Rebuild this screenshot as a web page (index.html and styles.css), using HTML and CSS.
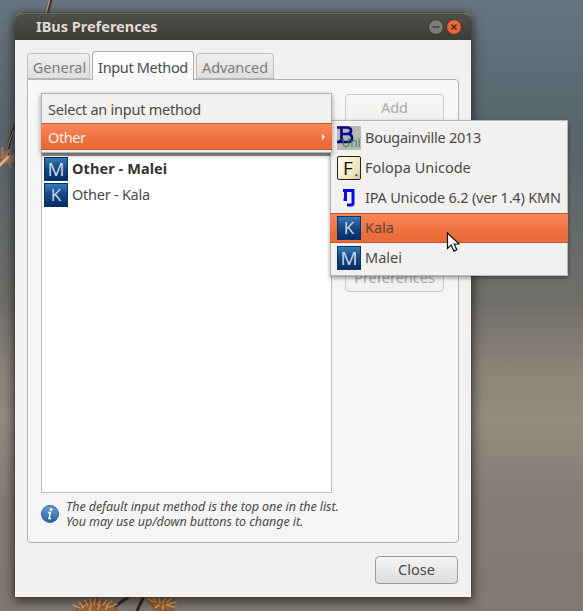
FILE: index.html
```html
<!DOCTYPE html>
<html lang="en">
<head>
<meta charset="utf-8">
<title>IBus Preferences</title>
<link rel="stylesheet" href="styles.css">
</head>
<body>
<svg class="wallpaper" viewBox="0 0 583 611" aria-hidden="true">
  <defs><filter id="soft"><feGaussianBlur stdDeviation=".7"/></filter></defs>
  <g filter="url(#soft)" fill="none" stroke-linecap="round">
    <path d="M51 -2L47 13" stroke="#4b382b" stroke-width="4"/>
    <path d="M50 -2L46 13" stroke="#b99a7c" stroke-width="1.5"/>
    <path d="M16 124Q8 142 7 156" stroke="#2e241d" stroke-width="3"/>
    <path d="M14 130Q7 145 6 156" stroke="#9b7a58" stroke-width="1.3"/>
    <path d="M-1 168L5 158L13 161L4 163L14 156L2 156L2 147L5 158L9 150M-1 157L7 160L-1 164M8 160L11 167" stroke="#a07455" stroke-width="2"/>
    <path d="M-2 167L8 157" stroke="#dfb58c" stroke-width="2.5"/>
    <path d="M108 611L130 596M137 611L144 596" stroke="#3b2a20" stroke-width="3"/>
    <path d="M76 613Q80 601 96 600Q113 600 118 613ZM145 597Q160 594 174 599L172 611L155 609Z" fill="#9c6537" stroke="#8c5930" stroke-width="2"/>
    <path d="M73 605l7 3M79 602l4 5M85 600l3 6M90 599l1 6M95 599l-1 6M101 599l-3 6M107 600l-4 5M112 601l-6 5M117 604l-7 3M82 608l3-3M90 610l1-5M98 609l2-4M106 609l2-3M148 599l6 3M153 597l3 5M159 597l1 6M166 597l-3 6M172 598l-5 4M176 602l-8 2M174 607l-8-2M163 609l0-4M155 608l4-3" stroke="#d8a468" stroke-width="1.6"/>
  </g>
</svg>
<main class="window">
  <header class="titlebar">
    <h1>IBus Preferences</h1>
    <div class="controls">
      <svg class="control" viewBox="0 0 16 16"><circle cx="8" cy="8" r="7.4" fill="#7d7b73" stroke="#2f2e2a" stroke-width=".8"/><path d="M4.5 8h7" stroke="#33322e" stroke-width="1.3"/></svg>
      <svg class="control" viewBox="0 0 16 16"><circle cx="8" cy="8" r="7.4" fill="#ee6538" stroke="#34302b" stroke-width=".8"/><path d="M5.5 5.5l5 5M10.5 5.5l-5 5" stroke="#402c24" stroke-width="1.4"/></svg>
    </div>
  </header>
  <nav class="tabs">
    <span class="tab"><span class="t-general">General</span></span>
    <span class="tab active"><span class="t-input">Input Method</span></span>
    <span class="tab"><span class="t-advanced">Advanced</span></span>
  </nav>
  <section class="panel">
    <div class="columns">
      <div class="picker">
        <div class="combo-menu">
          <div class="combo-item"><span class="t-select">Select an input method</span></div>
          <div class="combo-item selected"><span class="t-other">Other</span><i class="arrow"></i></div>
        </div>
        <ul class="list">
          <li><span class="key wide">M</span><b class="t-othermalei">Other - Malei</b></li>
          <li><span class="key">K</span><span class="t-otherkala">Other - Kala</span></li>
        </ul>
      </div>
      <div class="actions">
        <div class="button disabled"><span class="t-add">Add</span></div>
        <div class="button disabled"><span class="t-prefs">Preferences</span></div>
      </div>
    </div>
    <div class="note">
      <svg viewBox="0 0 18 18"><defs><linearGradient id="blue" x2="0" y2="1"><stop stop-color="#72a0cf"/><stop offset="1" stop-color="#2561a4"/></linearGradient></defs><circle cx="9" cy="9" r="8.5" fill="url(#blue)" stroke="#356592"/><circle cx="10" cy="4.6" r="1.4" fill="#fff"/><path d="M7 7.5h2.4L8 13.5h2.2" fill="none" stroke="#fff" stroke-width="1.6"/></svg>
      <div><p class="t-note1">The default input method is the top one in the list.</p><p class="t-note2">You may use up/down buttons to change it.</p></div>
    </div>
  </section>
  <footer><div class="button close"><span class="t-close">Close</span></div></footer>
</main>
<ul class="submenu">
  <li><svg viewBox="0 0 24 24"><path fill="#b7b7b7" d="M0 0h24v24H0z"/><path d="M0 1.500h10q4 0 4 3.200t-4 3.300H5M4.500 2v11q0 3-4.500 3h11q4 0 4-4t-4-4" fill="none" stroke="#07078a" stroke-width="2.700"/><text class="uni" x="4.500" y="20.500" textLength="19" lengthAdjust="spacingAndGlyphs">Uni</text></svg><span class="t-boug">Bougainville 2013</span></li>
  <li><span class="key cream">F<i>.</i></span><span class="t-folopa">Folopa Unicode</span></li>
  <li><svg viewBox="0 0 24 24"><path d="M6 4.500h2.500v9H6.500M8.500 4.500H16v13q0 1.500-1.500 1.500h-4.500" fill="none" stroke="#0808e8" stroke-width="3"/></svg><span class="t-ipa">IPA Unicode 6.2 (ver 1.4) KMN</span></li>
  <li class="selected"><span class="key">K</span><span class="t-kala">Kala</span></li>
  <li><span class="key wide">M</span><span class="t-malei">Malei</span></li>
</ul>
<svg class="cursor" viewBox="0 0 14 21"><path d="M1.500 1v15.500l3.700-3.400 2.700 6 2.900-1.300-2.600-5.800h5z" fill="#fff" stroke="#111" stroke-width="1.200"/></svg>
</body>
</html>
```
FILE: styles.css
```css
* { box-sizing: border-box; }
body {
  margin: 0; width: 583px; height: 611px; overflow: hidden; position: relative;
  padding: 13px 0 0 15px;
  font: 14.5px/20px "Noto Sans", sans-serif; color: #4a4a4a; white-space: nowrap;
  background: linear-gradient(180deg, #667580 0, #5f6c75 70px, #57646b 140px, #676b69 245px, #706e6a 300px, #8b8278 365px, #948a80 420px, #857c73 500px, #827971 611px);
}
ul, p, h1 { margin: 0; padding: 0; list-style: none; }
.wallpaper { position: absolute; left: 0; top: 0; width: 583px; height: 611px; }
.window {
  position: relative; width: 456px; height: 584px; display: flex; flex-direction: column;
  background: #f2f1f0; border-radius: 7px 7px 0 0;
  box-shadow: 0 0 0 .5px #47433e, 0 3px 12px 1px rgba(0,0,0,.65);
}
.titlebar {
  height: 27px; flex: none; display: flex; align-items: center; justify-content: space-between;
  padding: 0 9px 0 21px; border-radius: 7px 7px 0 0; border-top: 1px solid #66645b;
  background: linear-gradient(#504f48, #3c3b37);
}
.titlebar h1 { font-size: 14.5px; line-height: 20px; color: #dfdbd2; padding-bottom: 3px; }
.controls { display: flex; gap: 2px; padding-bottom: 1px; }
.control { width: 16px; height: 16px; }
.tabs { height: 39px; flex: none; display: flex; align-items: flex-end; gap: 2px; padding-left: 12px; }
.tab {
  height: 26px; width: 63px; display: flex; align-items: center; justify-content: center; color: #7b7b7b;
  border: 1px solid #c0bfbd; border-bottom-color: #b6b5b3; border-radius: 4px 4px 0 0;
  background: linear-gradient(#f1f0ef, #dfdedd);
}
.tab > span { padding-top: 1px; }
.tab:last-child { width: 78px; }
.tab.active { width: 102px; height: 29px; margin-bottom: -1px; color: #4c4c4c; border-color: #aeadab; border-bottom: 0; background: linear-gradient(#fff, #f8f8f8); z-index: 1; }
.panel {
  width: 432px; height: 464px; flex: none; margin: 0 0 0 12px; padding: 13px 13px 0;
  border: 1px solid #b5b4b2; border-radius: 0 4px 4px 4px; background: linear-gradient(#f9f9f9, #f5f5f5 50px);
}
.columns { display: flex; gap: 13px; height: 400px; }
.picker { width: 291px; display: flex; flex-direction: column; }
.combo-menu { height: 60px; flex: none; border: 1px solid #b3b2b0; background: #f2f1f0; box-shadow: 0 2px 5px rgba(0,0,0,.4); z-index: 1; }
.combo-item { height: 29px; padding: 1px 6px 0; display: flex; align-items: center; justify-content: space-between; }
.combo-item.selected { height: 27px; padding: 0 7px; margin: 0 -1px; color: #fff1e6; }
.selected { background: linear-gradient(#fa875c, #ea6c38 75%, #e96d3a); border: solid #c4562d; border-width: 1px 0; }
.arrow { border: 3.5px solid transparent; border-left: 3px solid #fff; border-right: 0; }
.list { flex: 1; border: 1px solid #bdbcba; border-top: 3px solid #9a9997; background: #fff; padding: 0 2px; }
.list li { height: 26px; display: flex; align-items: center; gap: 4px; }
.list li > :last-child { padding-bottom: 2px; }
.list b { color: #343434; }
.key {
  width: 24px; height: 24px; flex: none; display: flex; align-items: center; justify-content: center;
  background: linear-gradient(#347db8, #174b88 45%, #062c67); border: 1px solid #0c3265;
  font: 17px/22px "Open Sans", sans-serif; color: #d1d8e5;
}
.wide { font-size: 19px; }
.cream { position: relative; background: linear-gradient(125deg, #fffdf0, #eee5be 70%, #d4c795); border-color: #25231d; border-radius: 2px; color: #111; font-size: 19px; font-weight: 500; padding-right: 2px; }
.cream i { position: absolute; right: 2px; bottom: 1px; font: 13px/14px "Open Sans", sans-serif; }
.actions { width: 99px; height: 199px; display: flex; flex-direction: column; justify-content: space-between; padding-top: 1px; }
.button { height: 28px; padding-bottom: 2px; border: 1px solid #9d9c9a; border-radius: 4px; display: flex; align-items: center; justify-content: center; background: linear-gradient(#f4f4f4, #dededd); }
.disabled { color: #aaa9a8; border-color: #cccbca; background: linear-gradient(#f7f7f7, #efefee); }
.note { display: flex; align-items: center; gap: 7px; height: 42px; }
.note svg { width: 18px; height: 18px; }
.note p { font-size: 12.5px; line-height: 15px; font-style: italic; }
footer { display: flex; justify-content: flex-end; padding: 13px 13px 0 0; }
.close { width: 83px; }
.submenu {
  position: absolute; left: 330px; top: 120px; width: 238px; height: 156px; padding: 2px 0;
  background: #f2f1f0; border: 1px solid #bab8b5; box-shadow: 0 2px 4px rgba(0,0,0,.4);
}
.submenu li { height: 30px; display: flex; align-items: center; gap: 4px; padding-left: 6px; }
.submenu li > :last-child { padding-bottom: 2px; }
.submenu li.selected { margin: 0 -1px; padding-left: 7px; color: #5e4536; }
.submenu svg { width: 24px; height: 24px; flex: none; }
.uni { font: 12px "Open Sans", sans-serif; fill: #188a35; }
.cursor { position: absolute; left: 446px; top: 232px; width: 14px; height: 21px; }
.t-general { padding-left: 2px; }
.t-input { letter-spacing: -.35px; }
.t-advanced { letter-spacing: -.1px; }
.t-select { letter-spacing: -.23px; }
.t-other { letter-spacing: -.4px; }
.t-othermalei { letter-spacing: .08px; }
.t-otherkala { letter-spacing: -.25px; }
.t-boug { letter-spacing: -.27px; }
.t-ipa { letter-spacing: -.2px; }
.note .t-note1, .note .t-note2 { letter-spacing: -.06px; }
```
